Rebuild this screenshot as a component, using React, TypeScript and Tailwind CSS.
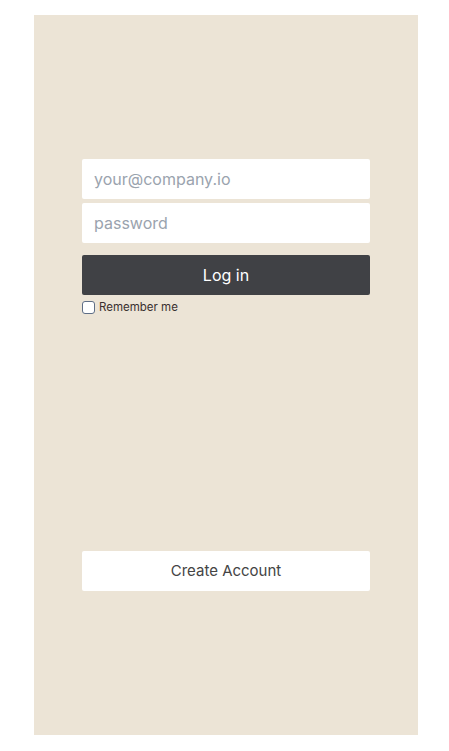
export default function App() {
  return (
    <div className="min-h-screen bg-white pt-[15px] pl-[34px] font-['Inter',sans-serif]">
      <div className="flex h-[720px] w-[384px] flex-col justify-between bg-[#ece4d6] px-12 py-36">
        <form className="flex flex-col" onSubmit={(e) => e.preventDefault()}>
          <input
            type="email"
            placeholder="your@company.io"
            className="h-10 rounded-[2px] bg-white px-3 text-base text-gray-800 outline-none placeholder:text-[#9aa3ae]"
          />
          <input
            type="password"
            placeholder="password"
            className="mt-1 h-10 rounded-[2px] bg-white px-3 text-base text-gray-800 outline-none placeholder:text-[#9aa3ae]"
          />
          <button
            type="submit"
            className="mt-3 h-10 rounded-[2px] bg-[#404145] text-base text-white"
          >
            Log in
          </button>
          <label className="mt-[5px] flex items-center gap-1 text-[11.5px] leading-[14px] text-[#3a3030]">
            <input
              type="checkbox"
              className="m-0 h-[13px] w-[13px] appearance-none rounded-[3px] border border-[#5f6e86] bg-white checked:bg-[#404145]"
            />
            Remember me
          </label>
        </form>
        <button
          type="button"
          className="h-10 rounded-[2px] bg-white text-[15px] text-[#444]"
        >
          Create Account
        </button>
      </div>
    </div>
  );
}
